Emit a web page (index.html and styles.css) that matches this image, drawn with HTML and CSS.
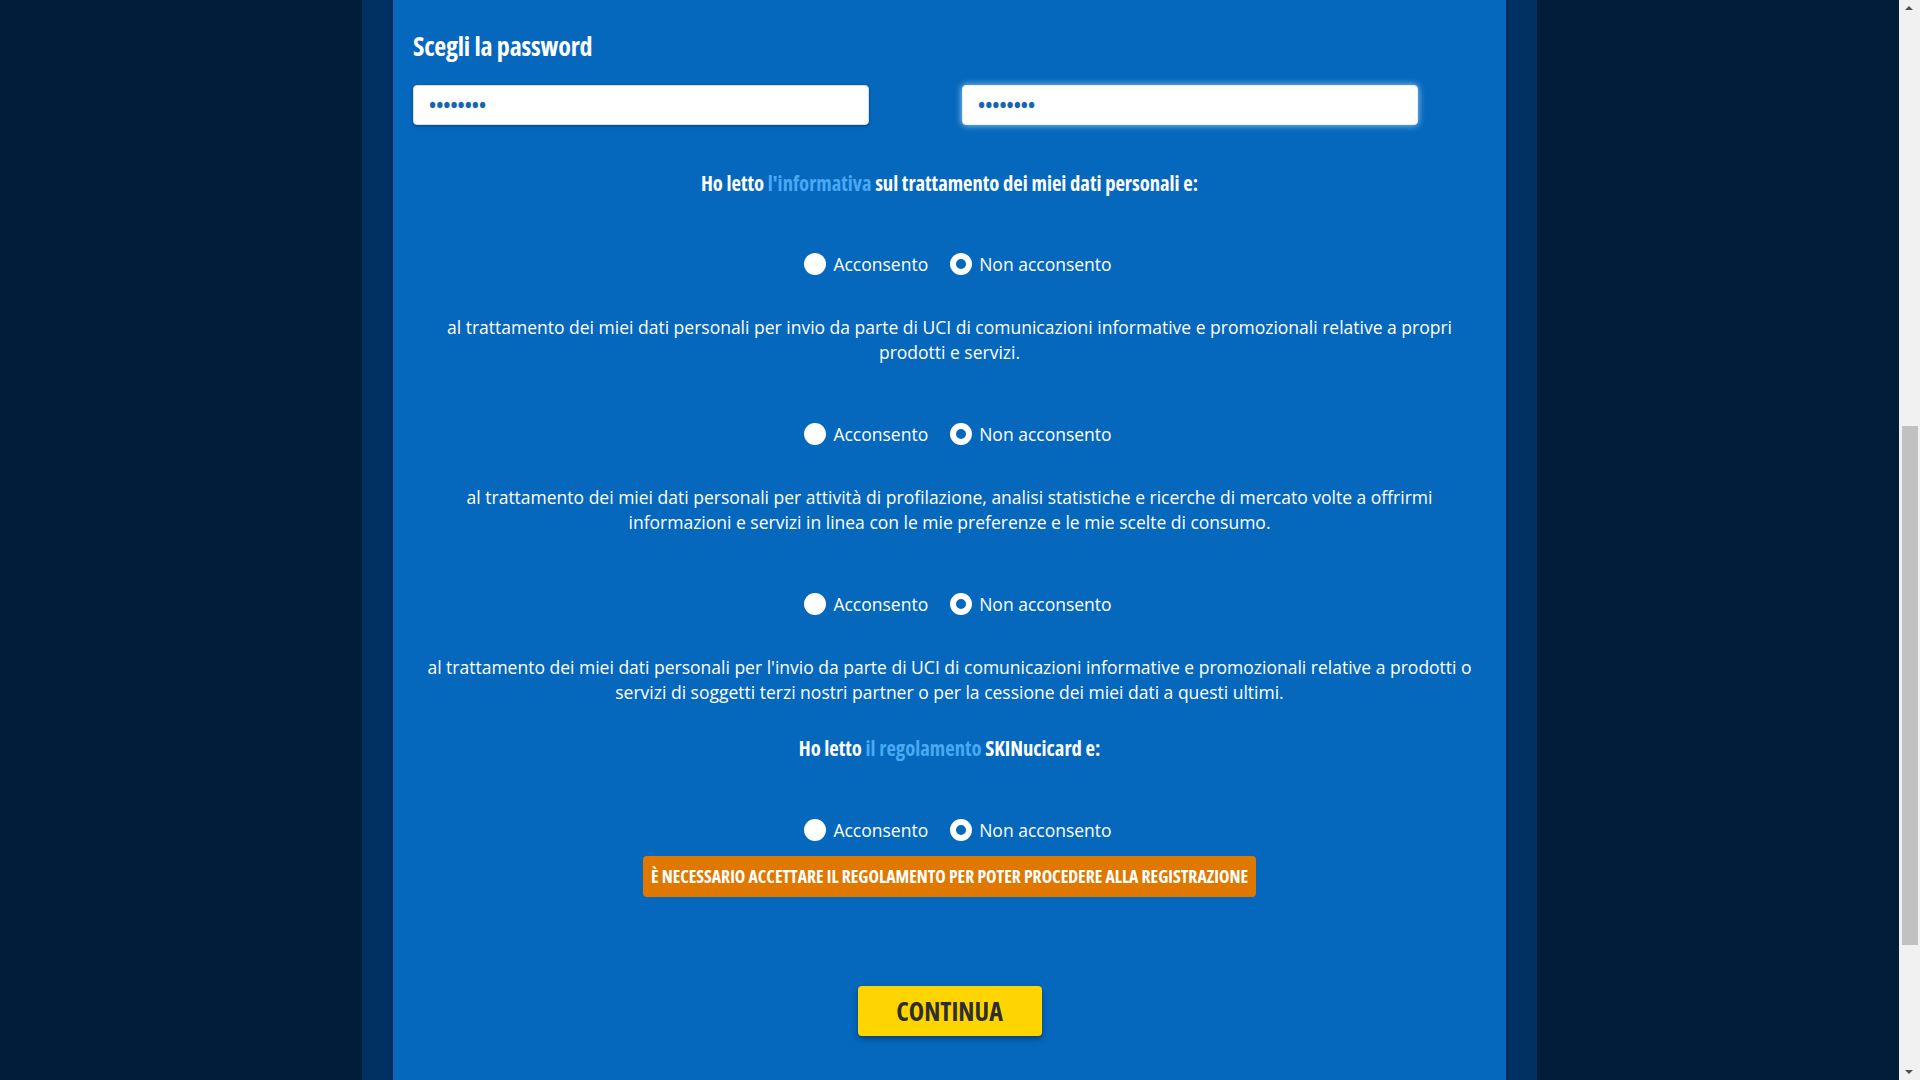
FILE: index.html
```html
<!DOCTYPE html>
<html lang="it">
<head>
<meta charset="utf-8">
<title>Registrazione</title>
<link rel="stylesheet" href="styles.css">
</head>
<body>
<div class="page">
  <div class="viewport">
    <div class="outer">
      <main class="panel">
        <h2 class="section-title">Scegli la password</h2>
        <div class="pw-row">
          <div class="pw-col"><input class="pw-input" type="password" value="password"></div>
          <div class="pw-col"><input class="pw-input pw-focus" type="password" value="password"></div>
        </div>

        <p class="lead lead-1">Ho letto <a href="#" class="link">l'informativa</a> sul trattamento dei miei dati personali e:</p>

        <div class="radios r1">
          <label class="radio"><span class="dot"></span>Acconsento</label>
          <label class="radio"><span class="dot checked"></span>Non acconsento</label>
        </div>
        <p class="consent c1">al trattamento dei miei dati personali per invio da parte di UCI di comunicazioni informative e promozionali relative a propri<br>prodotti e servizi.</p>

        <div class="radios r2">
          <label class="radio"><span class="dot"></span>Acconsento</label>
          <label class="radio"><span class="dot checked"></span>Non acconsento</label>
        </div>
        <p class="consent c2">al trattamento dei miei dati personali per attività di profilazione, analisi statistiche e ricerche di mercato volte a offrirmi<br>informazioni e servizi in linea con le mie preferenze e le mie scelte di consumo.</p>

        <div class="radios r3">
          <label class="radio"><span class="dot"></span>Acconsento</label>
          <label class="radio"><span class="dot checked"></span>Non acconsento</label>
        </div>
        <p class="consent c3">al trattamento dei miei dati personali per l'invio da parte di UCI di comunicazioni informative e promozionali relative a prodotti o<br>servizi di soggetti terzi nostri partner o per la cessione dei miei dati a questi ultimi.</p>

        <p class="lead lead-2">Ho letto <a href="#" class="link">il regolamento</a> SKINucicard e:</p>

        <div class="radios r4">
          <label class="radio"><span class="dot"></span>Acconsento</label>
          <label class="radio"><span class="dot checked"></span>Non acconsento</label>
        </div>
        <div class="alert-wrap">
          <div class="alert">È NECESSARIO ACCETTARE IL REGOLAMENTO PER POTER PROCEDERE ALLA REGISTRAZIONE</div>
        </div>

        <div class="btn-wrap">
          <button class="btn-continue" type="button">CONTINUA</button>
        </div>
      </main>
    </div>
  </div>
  <div class="scrollbar">
    <div class="sb-arrow sb-up"></div>
    <div class="sb-track"><div class="sb-thumb"></div></div>
    <div class="sb-arrow sb-down"></div>
  </div>
</div>
</body>
</html>
```
FILE: styles.css
```css
* { box-sizing: border-box; }
html, body { margin: 0; padding: 0; height: 1080px; overflow: hidden; }
body {
  background: #011d3a;
  font-family: "Open Sans", "DejaVu Sans", sans-serif;
  color: #fff;
}
.page { display: flex; height: 1080px; }
.viewport { flex: 1; display: flex; justify-content: center; }
.outer {
  width: 1175px;
  height: 1080px;
  background: #003163;
  padding: 0 31px;
}
.panel {
  height: 100%;
  background: #0568bd;
  padding: 29px 20px 0;
  box-shadow: 0 0 5px rgba(0, 20, 50, 0.55);
}
.section-title {
  margin: 0;
  font-size: 26px;
  line-height: 34px;
  font-weight: 700;
  font-stretch: 75%;
  letter-spacing: -0.2px;
  color: #fff;
}
.pw-row {
  margin-top: 22px;
  display: grid;
  grid-template-columns: 549px 456px;
}
.pw-input {
  display: block;
  width: 456px;
  height: 40px;
  border: 1px solid #d6dde6;
  border-radius: 4px;
  background: #fff;
  padding: 0 15px;
  font-family: "Open Sans", sans-serif;
  font-size: 19px;
  font-weight: 700;
  color: #1565b4;
  box-shadow: 0 1px 3px rgba(0, 0, 0, 0.35);
  outline: none;
}
.pw-focus {
  border-color: #e6f0fb;
  box-shadow: 0 0 7px rgba(190, 225, 255, 0.85);
}
.lead {
  margin: 0;
  text-align: center;
  font-size: 20.6px;
  line-height: 28px;
  font-weight: 700;
  font-stretch: 75%;
}
.lead-1 { margin-top: 44px; }
.lead-2 { margin-top: 30px; }
.link { color: #4aa9f3; text-decoration: none; }
.radios {
  display: flex;
  justify-content: center;
  gap: 22px;
  height: 24px;
  padding-left: 17px;
}
.r1 { margin-top: 55px; }
.r2 { margin-top: 58px; }
.r3 { margin-top: 58px; }
.r4 { margin-top: 56px; }
.radio {
  display: flex;
  align-items: center;
  gap: 7px;
  font-size: 17.5px;
  line-height: 24px;
  color: #fff;
}
.dot {
  width: 22px;
  height: 22px;
  border-radius: 50%;
  background: #fff;
  flex: none;
}
.dot.checked {
  background: #0568bd;
  border: 6px solid #fff;
}
.consent {
  margin: 0;
  text-align: center;
  font-size: 17.5px;
  line-height: 24.5px;
}
.c1 { margin-top: 39px; }
.c2 { margin-top: 39px; }
.c3 { margin-top: 39px; }
.alert-wrap { margin-top: 14px; display: flex; justify-content: center; }
.alert {
  background: #e07800;
  color: #fff;
  border-radius: 4px;
  height: 41px;
  line-height: 41px;
  padding: 0 8px;
  font-size: 17.7px;
  font-weight: 700;
  font-stretch: 75%;
}
.btn-wrap { margin-top: 89px; display: flex; justify-content: center; }
.btn-continue {
  width: 184px;
  height: 50px;
  background: #ffd500;
  border: none;
  border-radius: 4px;
  color: #2e2e2e;
  font-family: "Open Sans", sans-serif;
  font-size: 26px;
  font-weight: 700;
  font-stretch: 75%;
  box-shadow: 0 3px 6px rgba(0, 0, 0, 0.35);
  padding: 0;
}
.scrollbar {
  width: 21px;
  background: #f1f1f1;
  display: flex;
  flex-direction: column;
}
.sb-arrow { height: 17px; position: relative; }
.sb-up::after, .sb-down::after {
  content: "";
  position: absolute;
  left: 6px;
  border-left: 4px solid transparent;
  border-right: 4px solid transparent;
}
.sb-up::after { top: 6px; border-bottom: 4px solid #505050; }
.sb-down::after { top: 7px; border-top: 4px solid #505050; }
.sb-track { flex: 1; padding: 409px 2px 0 3px; }
.sb-thumb { height: 519px; background: #c1c1c1; }
```
